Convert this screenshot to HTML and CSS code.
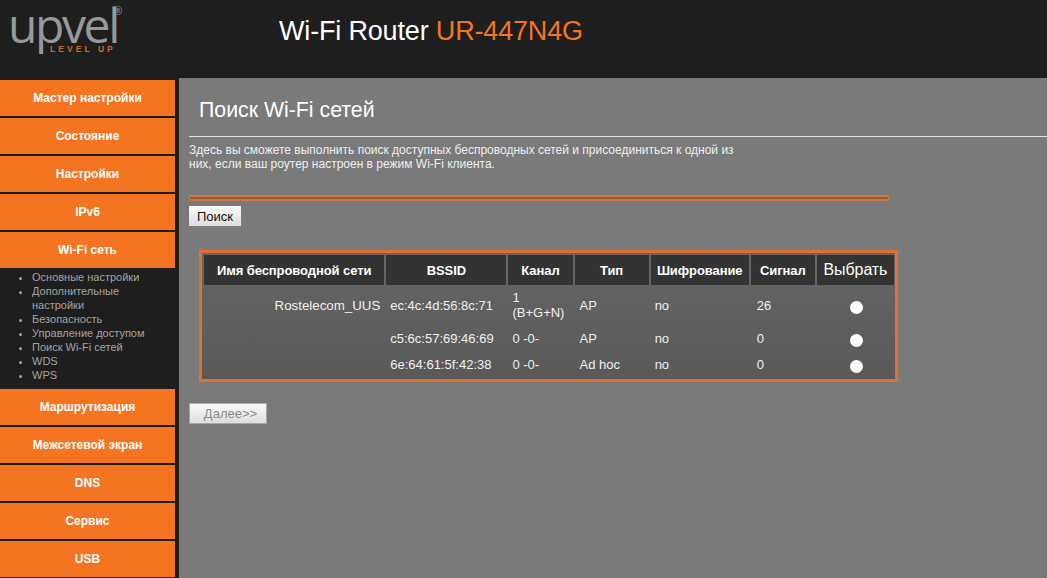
FILE: index.html
```html
<!DOCTYPE html>
<html lang="ru">
<head>
<meta charset="utf-8">
<title>Wi-Fi Router UR-447N4G</title>
<link rel="stylesheet" href="styles.css">
</head>
<body>
<header class="top">
  <div class="logo">
    <div class="logo-word">upvel<sup class="logo-reg">®</sup></div>
    <div class="logo-sub">LEVEL UP</div>
  </div>
  <div class="model">Wi-Fi Router <span class="model-code">UR-447N4G</span></div>
</header>
<div class="body-row">
  <nav class="side">
    <a class="nav-btn">Мастер настройки</a>
    <a class="nav-btn">Состояние</a>
    <a class="nav-btn">Настройки</a>
    <a class="nav-btn">IPv6</a>
    <a class="nav-btn">Wi-Fi сеть</a>
    <ul class="sub">
      <li>Основные настройки</li>
      <li>Дополнительные настройки</li>
      <li>Безопасность</li>
      <li>Управление доступом</li>
      <li>Поиск Wi-Fi сетей</li>
      <li>WDS</li>
      <li>WPS</li>
    </ul>
    <a class="nav-btn">Маршрутизация</a>
    <a class="nav-btn">Межсетевой экран</a>
    <a class="nav-btn">DNS</a>
    <a class="nav-btn">Сервис</a>
    <a class="nav-btn">USB</a>
  </nav>
  <main class="content">
    <h1 class="title">Поиск Wi-Fi сетей</h1>
    <hr class="rule">
    <p class="intro">Здесь вы сможете выполнить поиск доступных беспроводных сетей и присоединиться к одной из них, если ваш роутер настроен в режим Wi-Fi клиента.</p>
    <div class="progress"></div>
    <button class="btn">Поиск</button>
    <div class="table-frame">
      <table class="nets">
        <thead>
          <tr>
            <th class="c1">Имя беспроводной сети</th>
            <th class="c2">BSSID</th>
            <th class="c3">Канал</th>
            <th class="c4">Тип</th>
            <th class="c5">Шифрование</th>
            <th class="c6">Сигнал</th>
            <th class="c7">Выбрать</th>
          </tr>
        </thead>
        <tbody>
          <tr class="r1">
            <td class="name">Rostelecom_UUS</td>
            <td>ec:4c:4d:56:8c:71</td>
            <td>1<br>(B+G+N)</td>
            <td class="kind">AP</td>
            <td>no</td>
            <td class="signal">26</td>
            <td class="pick"><span class="radio"></span></td>
          </tr>
          <tr class="r2">
            <td class="name"></td>
            <td>c5:6c:57:69:46:69</td>
            <td>0 -0-</td>
            <td class="kind">AP</td>
            <td>no</td>
            <td class="signal">0</td>
            <td class="pick"><span class="radio"></span></td>
          </tr>
          <tr class="r3">
            <td class="name"></td>
            <td>6e:64:61:5f:42:38</td>
            <td>0 -0-</td>
            <td class="kind">Ad hoc</td>
            <td>no</td>
            <td class="signal">0</td>
            <td class="pick"><span class="radio"></span></td>
          </tr>
        </tbody>
      </table>
    </div>
    <button class="btn btn-next" disabled>Далее&gt;&gt;</button>
  </main>
</div>
</body>
</html>
```
FILE: styles.css
```css
html, body { margin: 0; padding: 0; height: 100%; overflow: hidden; }
body {
  background: #1e1e1e;
  font-family: "Liberation Sans", Arial, sans-serif;
  width: 1047px;
  height: 578px;
}
.top {
  height: 78px;
  display: flex;
  background: #1e1e1e;
}
.logo { width: 279px; padding: 2px 0 0 8px; box-sizing: border-box; }
.logo-word {
  font-family: "Open Sans", sans-serif;
  font-size: 48px;
  line-height: 46px;
  height: 46px;
  letter-spacing: -2.4px;
  color: #96989b;
  font-weight: 400;
  position: relative;
  width: 115px;
}
.logo-reg {
  position: absolute;
  left: 106px;
  top: -1px;
  font-size: 10px;
  line-height: 20px;
  letter-spacing: 0;
}
.logo-sub {
  color: #c96c2b;
  font-size: 8.5px;
  font-weight: 700;
  letter-spacing: 3.05px;
  line-height: 9px;
  margin: -3px 0 0 42px;
  white-space: nowrap;
}
.model {
  color: #fff;
  font-size: 27px;
  line-height: 32px;
  margin-top: 15px;
  letter-spacing: -0.17px;
}
.model-code { color: #f47421; }
.body-row { display: flex; height: 500px; }
.side {
  width: 175px;
  padding-top: 2px;
  margin-right: 4px;
  flex: none;
}
.nav-btn {
  display: block;
  height: 36px;
  line-height: 36px;
  margin-bottom: 2px;
  background: #f47421;
  color: #fff;
  font-size: 12px;
  font-weight: 700;
  text-align: center;
}
.sub {
  margin: -2px 0 0;
  padding: 2px 0 8px 32px;
  width: 130px;
  list-style: disc;
  color: #a3a3a3;
  font-size: 11px;
  line-height: 14px;
  height: 111px;
}
.sub li::marker { color: #a3a3a3; }
.content {
  flex: 1;
  background: #7a7a7a;
  padding: 0 0 0 10px;
  color: #f2f2f2;
  min-width: 0;
}
.title {
  margin: 0;
  padding: 18px 0 0 10px;
  font-size: 21.3px;
  font-weight: 400;
  line-height: 28px;
  color: #fff;
}
.rule {
  border: 0;
  height: 1px;
  background: #e2e2e2;
  margin: 12px 0 0;
}
.intro {
  margin: 6px 0 0;
  width: 560px;
  font-size: 12px;
  line-height: 14px;
  color: #efefef;
}
.progress {
  margin-top: 24px;
  width: 700px;
  height: 6px;
  box-sizing: border-box;
  background: #9c5a30;
  border: 2px solid #c47a4a;
  border-width: 2px 1px;
}
.btn {
  display: block;
  margin: 5px 0 0;
  padding: 0;
  width: 52px;
  height: 20px;
  border: 0;
  background: linear-gradient(#fafafa, #dddddd);
  color: #111;
  font-family: "Liberation Sans", Arial, sans-serif;
  font-size: 13px;
}
.table-frame {
  margin: 24px 0 0 10px;
  width: 699px;
  height: 132px;
  box-sizing: border-box;
  border: 3px solid #e2702f;
  background: linear-gradient(#666666, #595959);
  padding: 2px 0;
}
.nets {
  border-collapse: separate;
  border-spacing: 2px 0;
  table-layout: fixed;
  width: 694px;
  font-size: 13px;
  color: #f0f0f0;
}
.nets th {
  background: #333333;
  height: 30px;
  padding: 0;
  color: #fff;
  font-size: 13px;
  font-weight: 700;
  text-align: center;
  letter-spacing: -0.08px;
}
.nets th.c7 { font-size: 16px; font-weight: 400; }
.c1 { width: 180px; }
.c2 { width: 120px; }
.c3 { width: 64px; }
.c4 { width: 74px; }
.c5 { width: 98px; }
.c6 { width: 64px; }
.c7 { width: 77px; }
.nets td { padding: 0 0 0 4px; vertical-align: middle; }
.nets td.name { text-align: right; padding: 0 4px 0 0; font-size: 13.3px; }
.nets td.kind { padding-left: 5px; }
.nets td.signal { padding-left: 6px; }
.nets td.pick { text-align: center; padding: 0 0 0 2px; }
.r1 td { height: 40px; }
.r2 td { height: 26px; }
.r3 td { height: 26px; }
.radio {
  display: inline-block;
  width: 13px;
  height: 13px;
  border-radius: 50%;
  background: #fff;
  vertical-align: middle;
  margin-top: 4px;
}
.btn-next {
  margin: 21px 0 0;
  padding-left: 5px;
  width: 78px;
  height: 21px;
  color: #8a8a8a;
  background: linear-gradient(#fafafa, #dedede);
  border: 1px solid #a8a8a8;
  font-size: 13px;
}
```
